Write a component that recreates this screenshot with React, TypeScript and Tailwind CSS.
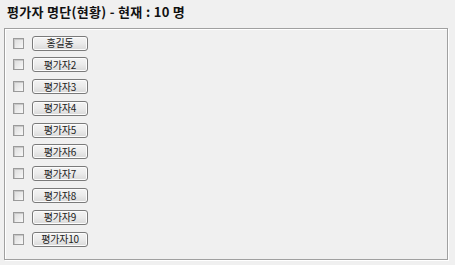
import React from "react";

const names = ["홍길동", "평가자2", "평가자3", "평가자4", "평가자5", "평가자6", "평가자7", "평가자8", "평가자9", "평가자10"];

export default function App() {
  return (
    <div
      className="w-[455px] h-[265px] bg-[#f0f0f0] overflow-hidden relative"
      style={{ fontFamily: '"Noto Sans CJK KR", "Noto Sans", sans-serif' }}
    >
      <div className="h-[28px] pl-[7px] pt-[2px] text-[13px] font-bold text-[#111] leading-[20px] tracking-[0.3px]">
        평가자 명단(현황) - 현재 : 10 명
      </div>
      <div className="ml-[4px] w-[444px] h-[232px] border border-[#a0a0a0] shadow-[inset_1px_1px_0_#ffffff,1px_1px_0_#ffffff] pt-[7px] pl-[8px]">
        <div className="flex flex-col gap-[7.8px]">
          {names.map((n) => (
            <div key={n} className="flex items-center h-[14px]">
              <div className="w-[11px] h-[11px] border border-[#9a9a9a] bg-gradient-to-br from-[#dcdcdc] to-[#f8f8f8] shadow-[inset_1px_1px_0_#c8c8c8]" />
              <div className="ml-[8px] w-[56px] h-[15px] rounded-[3px] border border-[#7a7a7a] bg-gradient-to-b from-[#f4f4f4] via-[#ebebeb] to-[#d9d9d9] shadow-[inset_0_0_0_1px_#fcfcfc] flex items-center justify-center text-[10px] leading-none text-[#222] tracking-[-0.2px]">
                {n}
              </div>
            </div>
          ))}
        </div>
      </div>
    </div>
  );
}
